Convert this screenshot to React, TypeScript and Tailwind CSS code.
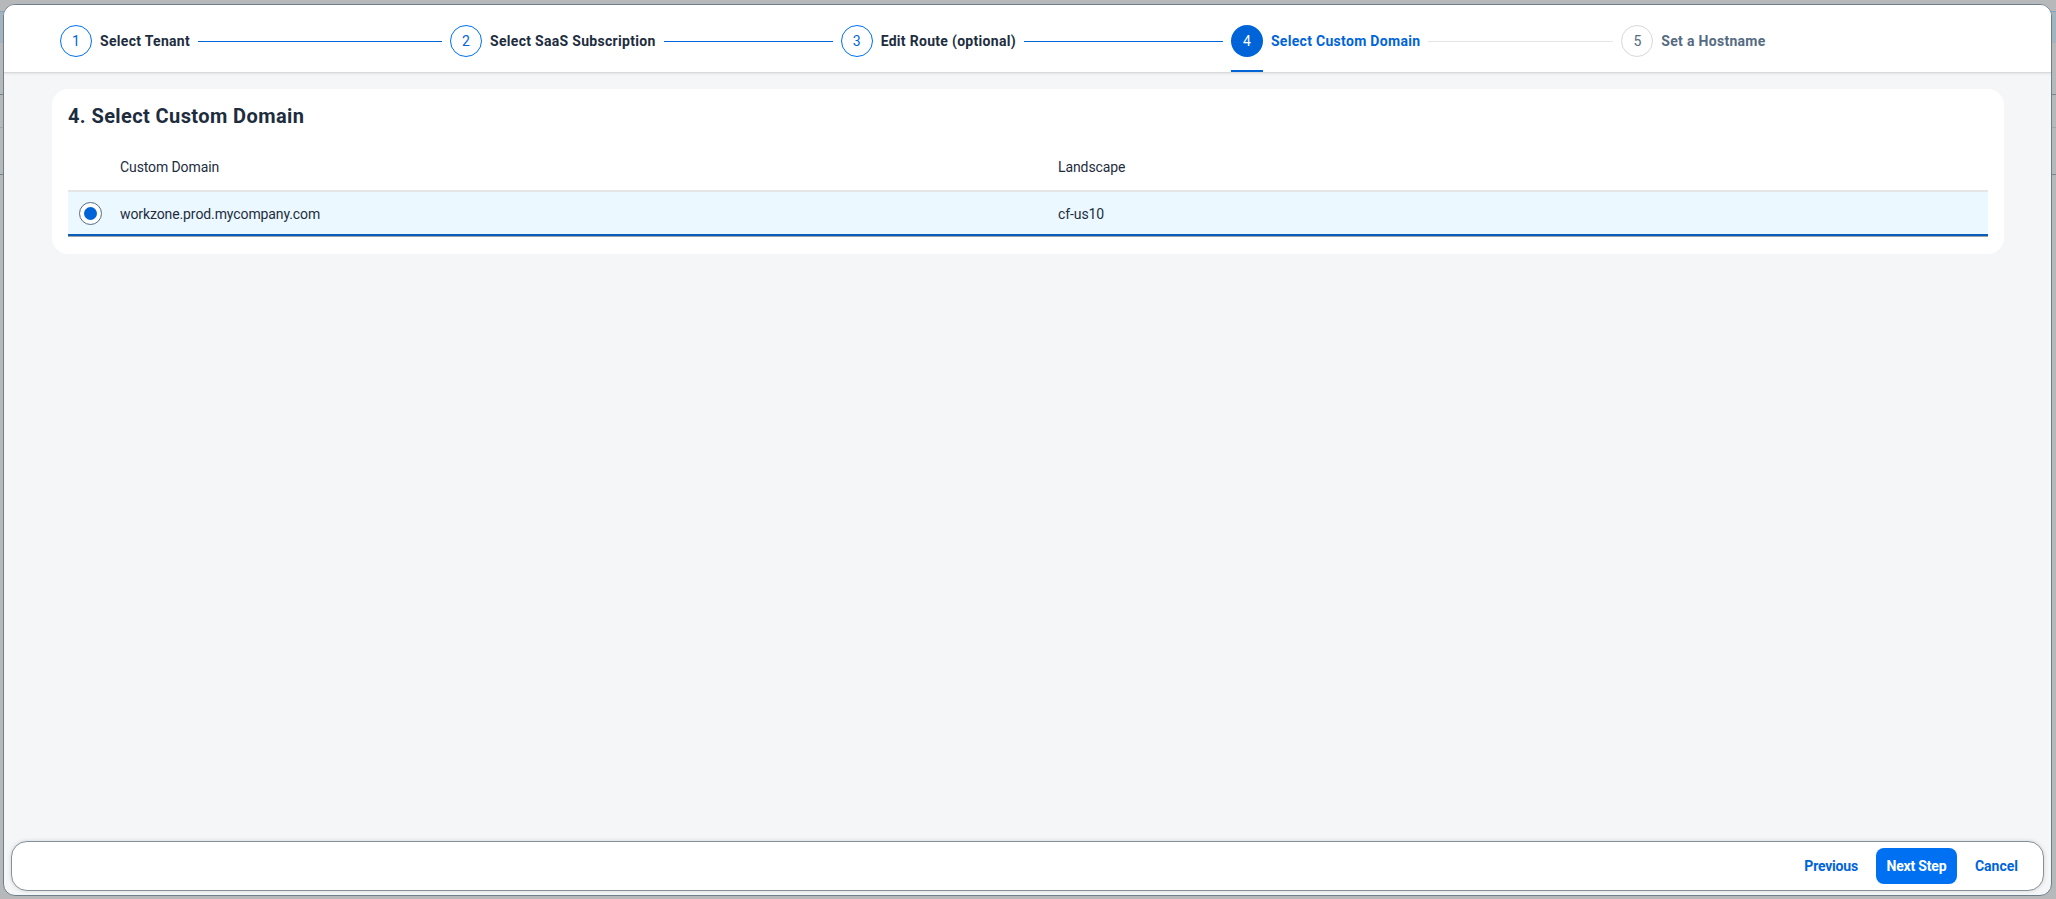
const font = { fontFamily: 'Roboto, "Noto Sans", sans-serif' };

const steps = [
  { n: 1, label: "Select Tenant", line: "w-[244px]", state: "done" },
  { n: 2, label: "Select SaaS Subscription", line: "w-[169px]", state: "done" },
  { n: 3, label: "Edit Route (optional)", line: "w-[199px]", state: "done" },
  { n: 4, label: "Select Custom Domain", line: "w-[185px]", state: "active" },
  { n: 5, label: "Set a Hostname", line: "", state: "todo" },
];

function Step({ n, label, line, state }: { n: number; label: string; line: string; state: string }) {
  return (
    <>
      <div className="relative flex h-[67px] items-center pt-[5px]">
        <div
          className={
            state === "active"
              ? "flex h-8 w-8 items-center justify-center rounded-full bg-[#0064d9] text-sm text-white"
              : state === "done"
                ? "flex h-8 w-8 items-center justify-center rounded-full border border-[#0070f2] text-sm text-[#0064d9]"
                : "flex h-8 w-8 items-center justify-center rounded-full border border-[#d9d9d9] text-sm text-[#556b82]"
          }
        >
          {n}
        </div>
        <span
          className={
            state === "active"
              ? "ml-2 text-sm font-bold tracking-[0.3px] whitespace-nowrap text-[#0064d9]"
              : state === "done"
                ? "ml-2 text-sm font-bold tracking-[0.3px] whitespace-nowrap text-[#1d2d3e]"
                : "ml-2 text-sm font-bold tracking-[0.3px] whitespace-nowrap text-[#556b82]"
          }
        >
          {label}
        </span>
        {state === "active" && <div className="absolute bottom-0 left-0 h-[2px] w-8 bg-[#0064d9]" />}
      </div>
      {line && (
        <div className={`mx-2 mt-[5px] h-px ${line} ${state === "active" ? "bg-[#e5e5e5]" : "bg-[#0064d9]"}`} />
      )}
    </>
  );
}

export default function App() {
  return (
    <div className="relative h-[899px] w-[2056px] overflow-hidden bg-[#b6b8b9]" style={font}>
      {/* page behind the dialog, only its edges show */}
      <div className="flex flex-col">
        <div className="h-[11px]" />
        <div className="h-[32px] border-t border-[#7fa6c4] bg-[#a3b4bf]" />
        <div className="h-[52px] border-b border-[#7d8389]" />
        <div className="h-[33px] border-b border-[#a4a6a7]" />
        <div className="h-[47px] border-b border-[#7d8389]" />
      </div>

      <div className="absolute top-[4px] left-[3px] flex h-[892px] w-[2049px] flex-col overflow-hidden rounded-xl border border-[#6f7e8d] bg-[#f5f6f7]">
        <div className="relative flex h-[68px] shrink-0 items-center border-b border-[#d9d9d9] bg-white pl-[56px] shadow-[0_1px_2px_rgba(0,0,0,0.08)]">
          {steps.map((s) => (
            <Step key={s.n} {...s} />
          ))}
        </div>

        <div className="flex-1 pt-4 pr-[47px] pl-[48px]">
          <div className="rounded-2xl bg-white px-4 pb-[17px]">
            <h2 className="flex h-[54px] items-center text-xl font-bold tracking-[0.4px] text-[#1d2d3e]">4. Select Custom Domain</h2>
            <div className="flex h-[47px] items-center text-sm tracking-[-0.1px] text-[#1d2d3e]">
              <div className="w-[990px] pl-[52px]">Custom Domain</div>
              <div>Landscape</div>
            </div>
            <div className="border-b border-[#9aa3ac]">
              <div className="flex h-[46px] items-center border-t-2 border-b-2 border-t-[#e5e5e5] border-b-[#0a5cb8] bg-[#ebf8ff] text-sm tracking-[-0.1px] text-[#1d2d3e]">
                <div className="flex w-[52px] justify-center pr-[8px]">
                  <div className="flex h-[23px] w-[23px] items-center justify-center rounded-full border border-[#556b81] bg-white">
                    <div className="h-[13px] w-[13px] rounded-full bg-[#0064d9]" />
                  </div>
                </div>
                <div className="w-[938px] pt-px">workzone.prod.mycompany.com</div>
                <div className="pt-px">cf-us10</div>
              </div>
            </div>
          </div>
        </div>

        <div className="mx-[7px] mb-[4px] flex h-[50px] shrink-0 items-center justify-end gap-[18px] rounded-2xl border border-[#84909c] bg-white pr-[25px] text-sm font-bold text-[#0064d9] shadow-[0_0_4px_rgba(0,0,0,0.15)]">
          <span className="tracking-[-0.2px]">Previous</span>
          <button className="h-9 w-[81px] rounded-lg bg-[#0070f2] font-bold tracking-[-0.2px] text-white">Next Step</button>
          <span>Cancel</span>
        </div>
      </div>
    </div>
  );
}
